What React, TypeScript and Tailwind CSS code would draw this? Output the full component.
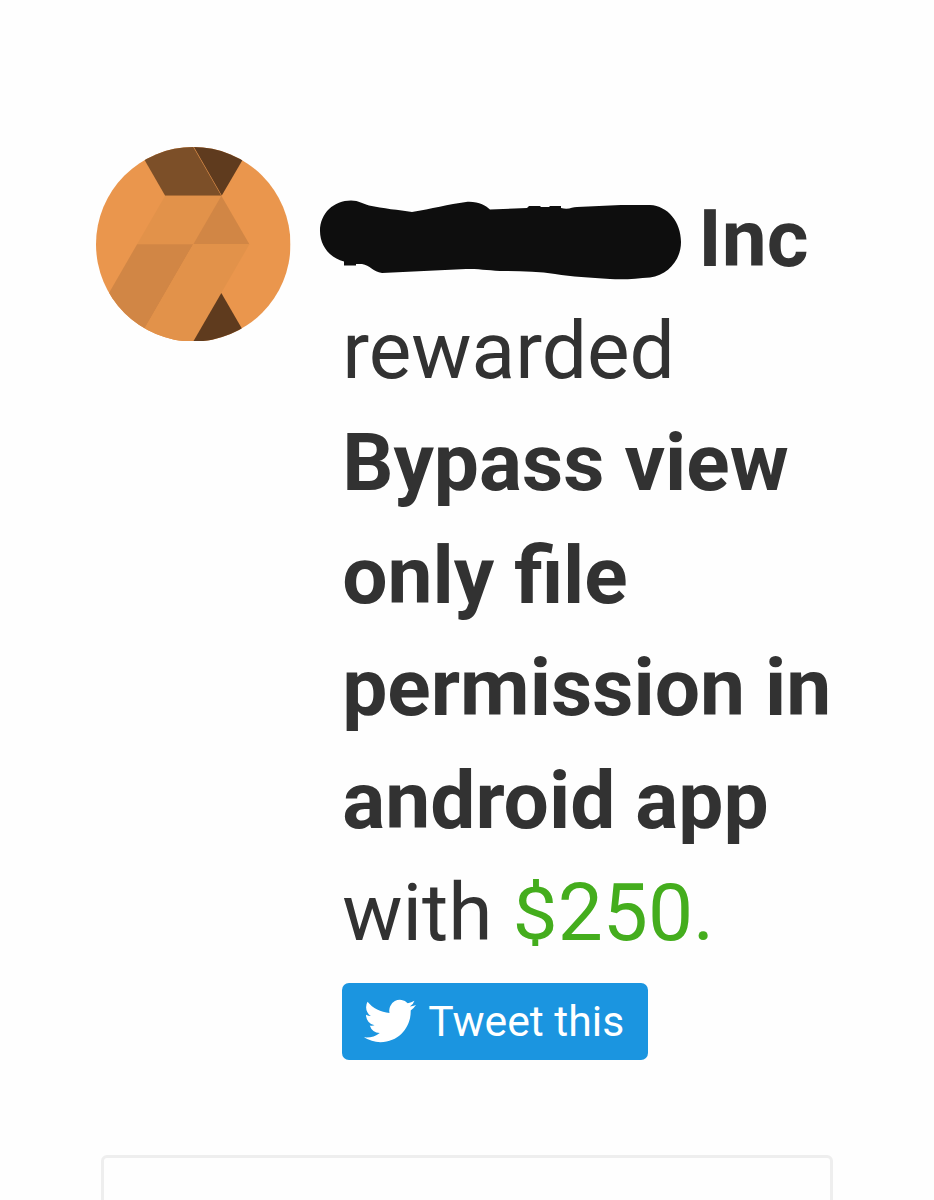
import type { ReactNode } from "react";

// ── Avatar ─────────────────────────────────────────────────────────────────────

const AVATAR_SHAPES = [
  { points: "41.2,0 97.5,0 125.65,48.75 69.35,48.75", fill: "#7c4f28" },
  { points: "98.2,0 154.5,0 126.1,48.6", fill: "#5f3b1e" },
  { points: "69.35,48.75 125.65,48.75 97.5,97.5 41.2,97.5", fill: "#e2924a" },
  { points: "125.65,48.75 153.8,97.5 97.5,97.5", fill: "#d18645" },
  { points: "41.2,97.5 97.5,97.5 41.2,195 -15.1,195", fill: "#d18645" },
  { points: "97.5,97.5 153.8,97.5 97.5,195 41.2,195", fill: "#e2924a" },
  { points: "125.65,146.25 153.8,195 97.5,195", fill: "#5f3b1e" },
];

function Avatar() {
  return (
    <div className="mt-[146.500px] ml-24 size-[194.500px] shrink-0">
      <svg viewBox="0 0 195 195" className="size-full">
        <clipPath id="avatar-circle">
          <circle cx="97.5" cy="97.5" r="97.5" />
        </clipPath>
        <g clipPath="url(#avatar-circle)">
          <rect width="195" height="195" fill="#ea964d" />
          {AVATAR_SHAPES.map((shape) => (
            <polygon key={shape.points} points={shape.points} fill={shape.fill} />
          ))}
        </g>
      </svg>
    </div>
  );
}

// ── Hidden team name ───────────────────────────────────────────────────────────

function Redacted() {
  return (
    <span className="relative inline-block h-[57px] w-[356px]">
      <svg
        viewBox="316 196 370 88"
        className="absolute -top-[13px] -left-[26.500px] h-[88px] w-[370px] max-w-none"
        fill="#0e0e0e"
      >
        <path d="M320 231C320 213 334 200.500 351 200.500C359 200.500 363 204 369 205.500C383 208.500 399 210 412 212C431 209 449 204 466 202C478 201 486 206 490 209.500L527 208L529 206H540L541 207H549L550 206H561V208C569 210 572 207 577 207C592 206.500 606 205.500 621 205L650 205C668 206 681 222 681 242C681 260 668 275 650 277.500C637 278.500 625 280 610 279C590 277.500 572 277 555 274C538 271.500 518 271 500 271C487 270 478 269 466 269C438 270 410 272 382 273C373 272 370 265 362 264H356V265.500H344V261.500C330 258 320 246 320 231Z" />
      </svg>
    </span>
  );
}

function Line({ bold, children }: { bold?: boolean; children: ReactNode }) {
  return (
    <div className={bold ? "font-bold whitespace-nowrap" : "font-normal whitespace-nowrap"}>
      {children}
    </div>
  );
}

// ── Tweet button ───────────────────────────────────────────────────────────────

function TweetButton() {
  return (
    <button className="mt-[13.500px] flex h-[77.500px] w-[306px] items-center rounded-[7px] bg-[#1b95e0] pl-[21.500px] text-[42.700px] leading-none text-white">
      <svg viewBox="0 0 24 24" className="mr-[12.500px] mb-[2px] size-[52px] shrink-0" fill="currentColor">
        <path d="M23.954 4.569a10 10 0 0 1-2.825.775 4.958 4.958 0 0 0 2.163-2.723c-.951.555-2.005.959-3.127 1.184a4.920 4.920 0 0 0-8.384 4.482C7.691 8.094 4.066 6.130 1.640 3.161a4.822 4.822 0 0 0-.666 2.475c0 1.710.870 3.213 2.188 4.096a4.904 4.904 0 0 1-2.228-.616v.061a4.923 4.923 0 0 0 3.946 4.827 4.996 4.996 0 0 1-2.212.085 4.937 4.937 0 0 0 4.604 3.417 9.868 9.868 0 0 1-6.102 2.105c-.390 0-.779-.023-1.170-.067a13.995 13.995 0 0 0 7.557 2.209c9.054 0 13.999-7.496 13.999-13.986 0-.209 0-.420-.015-.630a9.936 9.936 0 0 0 2.460-2.548z" />
      </svg>
      <span>Tweet this</span>
    </button>
  );
}

export default function App() {
  return (
    <div className="flex h-[1200px] w-[934px] flex-col overflow-hidden bg-[#fefefe] font-['Roboto',sans-serif] text-[#323232]">
      <div className="flex h-[1155px] shrink-0 items-start">
        <Avatar />
        <div className="mt-[182.500px] ml-[51.700px] text-[80.300px] leading-[112.400px]">
          <Line bold>
            <Redacted />
            Inc
          </Line>
          <Line>rewarded</Line>
          <Line bold>Bypass view</Line>
          <Line bold>only file</Line>
          <Line bold>permission in</Line>
          <Line bold>android app</Line>
          <Line>
            with{" "}
            <span className="text-[#44ad1d]">
              <span className="inline-block origin-[50%_62%] scale-y-90">$</span>250.
            </span>
          </Line>
          <TweetButton />
        </div>
      </div>
      <div className="ml-[101px] h-20 w-[732px] shrink-0 rounded-md border-3 border-[#eeeeee]" />
    </div>
  );
}
